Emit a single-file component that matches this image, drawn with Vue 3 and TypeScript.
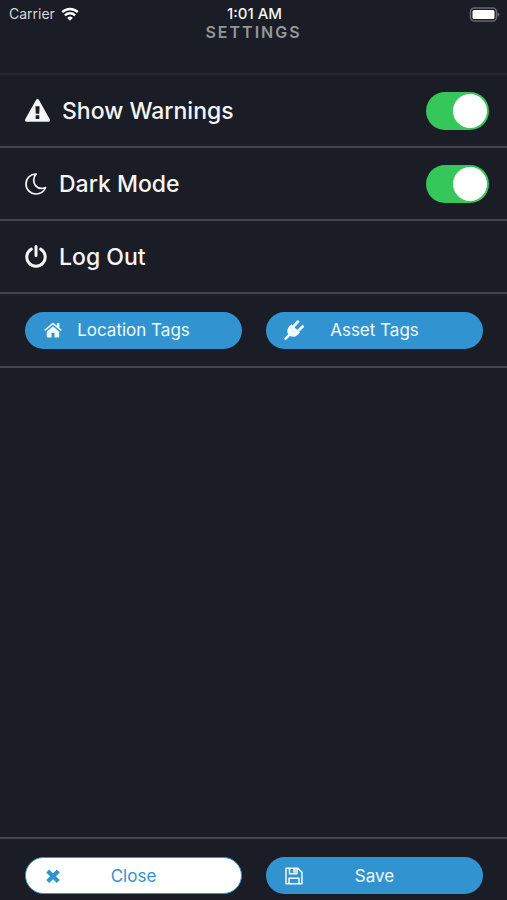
<script setup lang="ts">
import { ref } from 'vue'

const showWarnings = ref<boolean>(true)
const darkMode = ref<boolean>(true)
</script>

<template>
  <div class="screen">
    <header class="header">
      <div class="status">
        <div class="carrier">
          <span>Carrier</span>
          <svg class="wifi" viewBox="0 0 18 14" aria-hidden="true">
            <path d="M1.2 5.2a11.2 11.2 0 0 1 15.6 0" />
            <path d="M3.9 8.300a7.400 7.400 0 0 1 10.200 0" />
            <path class="dot" d="M9 13.800 6.200 10.900a4 4 0 0 1 5.600 0z" />
          </svg>
        </div>
        <time class="clock">1:01 AM</time>
        <svg class="battery" viewBox="0 0 31 15" aria-hidden="true">
          <rect class="shell" x="1.500" y="1" width="26" height="13" rx="4" />
          <rect class="charge" x="3.500" y="3" width="22" height="9" rx="1.500" />
          <path class="tip" d="M28.500 5.200q2 .8 2 2.300t-2 2.300z" />
        </svg>
      </div>
      <h1 class="title">Settings</h1>
    </header>

    <main class="content">
      <div class="row">
        <label class="row-label" for="warnings">
          <svg class="warning" viewBox="0 0 26 25" aria-hidden="true">
            <path fill="currentColor" fill-rule="evenodd" d="M11.600.9a1.600 1.600 0 0 1 2.800 0l11.400 20.300c.6 1.200-.2 2.500-1.400 2.500H1.600c-1.200 0-2-1.300-1.400-2.500zM10.800 7.600l.4 7.800h3.600l.4-7.800zm.3 9.400v3.800h3.800V17z" />
          </svg>
          Show Warnings
        </label>
        <input id="warnings" v-model="showWarnings" class="switch" type="checkbox" role="switch" />
      </div>
      <div class="row">
        <label class="row-label" for="dark">
          <svg class="glyph" viewBox="0 0 22 22" aria-hidden="true">
            <path fill="none" stroke="currentColor" stroke-width="1.700" stroke-linejoin="round" d="M11.200 1C5.600.8 1 5.200 1 11s4.500 10 10 10c4.300 0 7.800-2.400 9.600-6.500-3.700 1.500-7.700.9-10-1.900C7.900 9.300 8 4.400 11.200 1z" />
          </svg>
          Dark Mode
        </label>
        <input id="dark" v-model="darkMode" class="switch" type="checkbox" role="switch" />
      </div>
      <button class="row row-button" type="button">
        <span class="row-label">
          <svg class="glyph" viewBox="0 0 22 24" aria-hidden="true">
            <path fill="none" stroke="currentColor" stroke-width="3" stroke-linecap="round" d="M6.300 4.100a9.200 9.200 0 1 0 9.400 0M11 1.600v9" />
          </svg>
          Log Out
        </span>
      </button>
      <div class="row row-actions actions">
        <button class="pill" type="button">
          <svg class="pill-icon" viewBox="0 0 18 18" aria-hidden="true">
            <path fill="currentColor" d="M9 5.300 2.800 10.400V15.500q0 1 1 1h3.700V12h3v4.500h3.700q1 0 1-1v-5.100zM17.900 8.900l-2.500-2.100V2h-2.500v2.700L10 2.200q-1-.8-2 0L.1 8.900l1 1.200L9 3.600l7.900 6.500z" />
          </svg>
          <span class="pill-text">Location Tags</span>
        </button>
        <button class="pill" type="button">
          <svg class="pill-icon plug" viewBox="0 0 20 20" aria-hidden="true">
            <path fill="currentColor" d="M5.700 6.200 14 14.500c-2.300 2.500-5.200 3-8 1.600l-3.500 3.500q-1 .7-1.800 0-.8-.9 0-1.900l3.500-3.500C2.500 11.400 3.200 8.300 5.700 6.200z" />
            <path fill="currentColor" d="m7.600 4.200 8.200 8.200-2.300 2.800-8.600-8.600z" />
            <path fill="none" stroke="currentColor" stroke-width="2.800" stroke-linecap="round" d="m9.500 6.500 4.400-4.700M14 11l4.600-4.500" />
          </svg>
          <span class="pill-text">Asset Tags</span>
        </button>
      </div>
    </main>

    <footer class="footer actions">
      <button class="pill outline" type="button">
        <svg class="pill-icon" viewBox="0 0 18 18" aria-hidden="true">
          <path fill="none" stroke="currentColor" stroke-width="4.200" stroke-linecap="square" stroke-linejoin="round" d="m5.200 5.400 7.600 7.600M12.800 5.400 5.200 13" />
        </svg>
        <span class="pill-text">Close</span>
      </button>
      <button class="pill" type="button">
        <svg class="pill-icon" viewBox="0 0 18 18" aria-hidden="true">
          <path fill="none" stroke="currentColor" stroke-width="1.500" stroke-linejoin="round" d="M1 1.200h11.800L17 5.400v11.400H1zM4 16.800v-5.600h10v5.600M4.500 1.200v5.500h7.500V1.200" />
          <path fill="currentColor" d="M8.300 2h2.400v3.800H8.300z" />
        </svg>
        <span class="pill-text">Save</span>
      </button>
    </footer>
  </div>
</template>

<style>
body {
  margin: 0;
  background: #1a1d25;
}
</style>

<style scoped>
.screen {
  display: flex;
  flex-direction: column;
  min-height: 100vh;
  background: #1a1d25;
  color: #f5f5f8;
  font-family: Inter, "Liberation Sans", sans-serif;
}

.screen * {
  box-sizing: border-box;
}

.header {
  height: 75px;
  border-bottom: 2px solid #252830;
}

.status {
  display: grid;
  grid-template-columns: 1fr auto 1fr;
  align-items: center;
  height: 24px;
  padding: 4px 7px 0 9px;
  font-size: 15px;
  line-height: 20px;
}

.carrier {
  display: flex;
  align-items: center;
  gap: 6px;
  color: #d6d7da;
  font-size: 14px;
}

.wifi {
  width: 18px;
  height: 14px;
  fill: none;
  stroke: #fff;
  stroke-width: 2.4;
}

.wifi .dot {
  fill: #fff;
  stroke: none;
}

.clock {
  font-weight: 500;
}

.battery {
  justify-self: end;
  width: 31px;
  height: 15px;
}

.shell {
  fill: none;
  stroke: #66686e;
  stroke-width: 1.6;
}

.charge {
  fill: #fff;
}

.tip {
  fill: #66686e;
}

.title {
  margin: 0;
  color: #94969c;
  font-size: 16px;
  font-weight: 600;
  line-height: 16px;
  letter-spacing: 2px;
  text-align: center;
  text-transform: uppercase;
}

.content {
  flex: 1;
}

.row {
  display: flex;
  align-items: center;
  justify-content: space-between;
  width: 100%;
  height: 73px;
  padding: 0 18px 0 25px;
  border: 0;
  border-bottom: 2px solid #42454d;
}

.row-button {
  background: none;
  color: inherit;
  font-family: inherit;
  cursor: pointer;
}

.row-label {
  display: flex;
  align-items: center;
  gap: 12px;
  font-size: 23px;
  font-weight: 500;
  line-height: 32px;
}

.warning {
  width: 25px;
  height: 24px;
}

.glyph {
  width: 22px;
  height: 24px;
}

.switch {
  appearance: none;
  display: flex;
  align-items: center;
  width: 63px;
  height: 38px;
  margin: 0;
  padding: 2px;
  border-radius: 19px;
  background: #42454d;
  cursor: pointer;
}

.switch::before {
  content: "";
  width: 34px;
  height: 34px;
  border-radius: 50%;
  background: #fff;
}

.switch:checked {
  justify-content: flex-end;
  background: #35c759;
}

.actions {
  display: grid;
  grid-template-columns: 1fr 1fr;
  gap: 24px;
  padding: 0 24px 0 25px;
}

.row-actions {
  height: 74px;
}

.footer {
  padding-top: 18px;
  padding-bottom: 6px;
  border-top: 2px solid #42454d;
}

.pill {
  display: grid;
  grid-template-columns: 20px 1fr 20px;
  align-items: center;
  height: 37px;
  padding: 0 18px;
  border: 0;
  border-radius: 19px;
  background: #3194d1;
  color: #f2f9fe;
  font-family: inherit;
  font-size: 17px;
  line-height: 24px;
  cursor: pointer;
}

.outline {
  padding: 0 17px;
  border: 1px solid #3194d1;
  background: #fff;
  color: #3194d1;
}

.pill-icon {
  justify-self: center;
  width: 18px;
  height: 18px;
}

.plug {
  width: 20px;
  height: 20px;
}

.pill-text {
  text-align: center;
}
</style>
